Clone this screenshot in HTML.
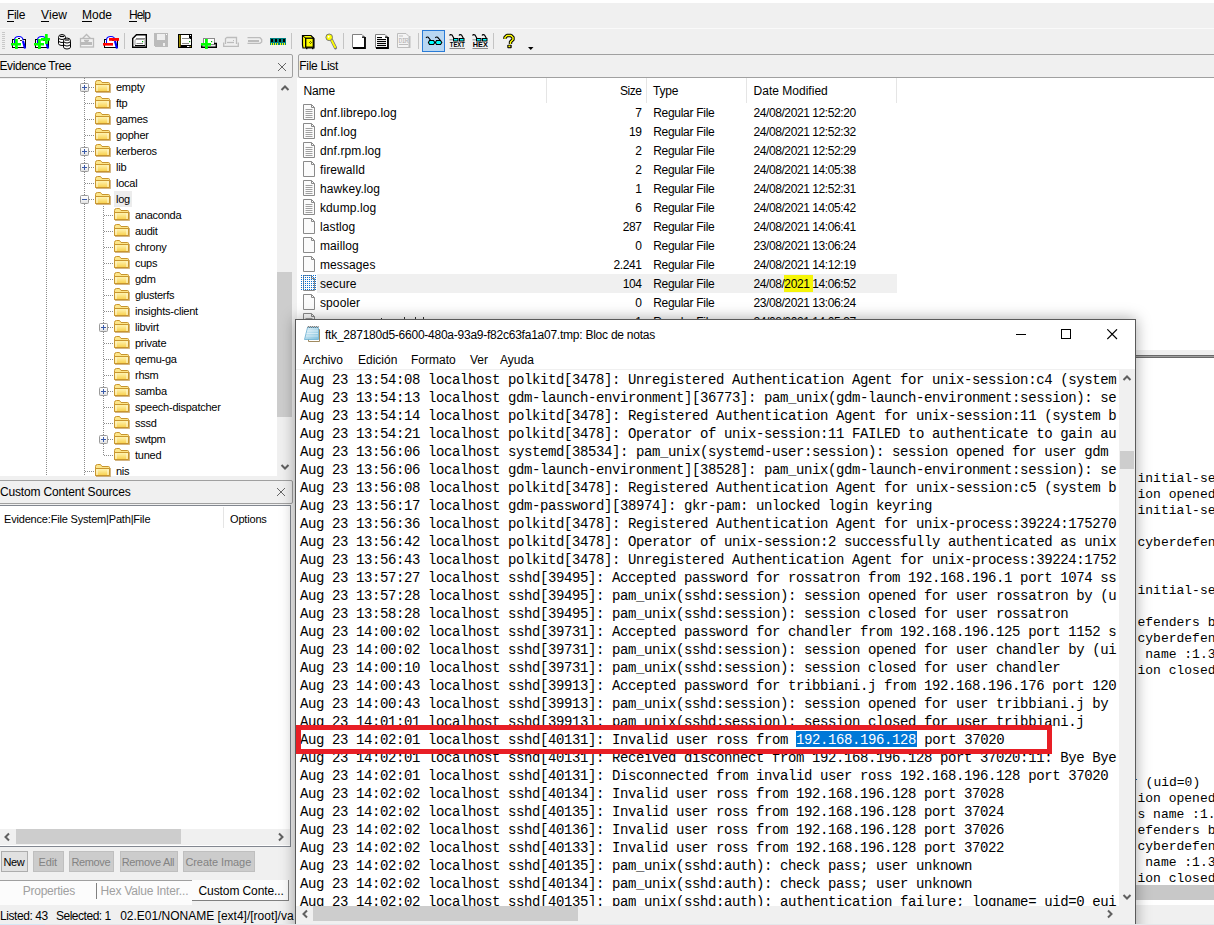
<!DOCTYPE html><html><head><meta charset="utf-8"><style>
*{box-sizing:border-box}
body{margin:0;width:1214px;height:925px;position:relative;overflow:hidden;background:#f0f0f0;font-family:"Liberation Sans",sans-serif;color:#000}
.a{position:absolute}
.t{position:absolute;white-space:pre;line-height:1}
.mono{font-family:"Liberation Mono",monospace}
u{text-decoration:none;border-bottom:1px solid #000;display:inline-block;line-height:10px;height:12px}
</style></head><body>

<div class="a" style="left:0px;top:0px;width:1214px;height:3px;background:#fff;"></div>
<div class="t" style="left:7px;top:9px;font-size:12px;letter-spacing:-0.334px;"><u>F</u>ile</div>
<div class="t" style="left:41px;top:9px;font-size:12px;"><u>V</u>iew</div>
<div class="t" style="left:82px;top:9px;font-size:12px;"><u>M</u>ode</div>
<div class="t" style="left:129px;top:9px;font-size:12px;letter-spacing:-0.920px;"><u>H</u>elp</div>
<div class="a" style="left:0px;top:28px;width:1214px;height:1px;background:#fafafa;"></div>
<svg class="a" style="left:0;top:0" width="540" height="54"><rect x="2" y="32" width="3" height="1" fill="#c8c8c8"/><rect x="2" y="34" width="3" height="1" fill="#c8c8c8"/><rect x="2" y="36" width="3" height="1" fill="#c8c8c8"/><rect x="2" y="38" width="3" height="1" fill="#c8c8c8"/><rect x="2" y="40" width="3" height="1" fill="#c8c8c8"/><rect x="2" y="42" width="3" height="1" fill="#c8c8c8"/><rect x="2" y="44" width="3" height="1" fill="#c8c8c8"/><rect x="2" y="46" width="3" height="1" fill="#c8c8c8"/><rect x="2" y="48" width="3" height="1" fill="#c8c8c8"/><rect x="124" y="33" width="1" height="16" fill="#c4c4c4"/><rect x="291" y="33" width="1" height="16" fill="#c4c4c4"/><rect x="343" y="33" width="1" height="16" fill="#c4c4c4"/><rect x="418" y="33" width="1" height="16" fill="#c4c4c4"/><rect x="493" y="33" width="1" height="16" fill="#c4c4c4"/><g transform="translate(8,32)"><rect x="4.5" y="7.5" width="13" height="8" fill="#fff" stroke="#000"/><path d="M6.5 11V8.2Q6.5 4.5 10.8 4.5Q15 4.5 15 8.5" fill="#fff" stroke="#0000ff" stroke-width="1.1"/><path d="M15 9L17 16.5" stroke="#0000ff" stroke-width="2.2"/><rect x="10" y="6" width="2" height="1" fill="#000"/><rect x="12" y="8" width="2" height="1" fill="#333"/></g><rect x="11" y="43" width="10" height="2.5" fill="#00ff00"/><rect x="15" y="39" width="2.8" height="10" fill="#00ff00"/><g transform="translate(31,32)"><rect x="4.5" y="7.5" width="13" height="8" fill="#fff" stroke="#000"/><path d="M6.5 11V8.2Q6.5 4.5 10.8 4.5Q15 4.5 15 8.5" fill="#fff" stroke="#0000ff" stroke-width="1.1"/><path d="M15 9L17 16.5" stroke="#0000ff" stroke-width="2.2"/><rect x="10" y="6" width="2" height="1" fill="#000"/><rect x="12" y="8" width="2" height="1" fill="#333"/></g><rect x="34" y="43" width="10" height="2.5" fill="#00ff00"/><rect x="38" y="39" width="2.8" height="10" fill="#00ff00"/><rect x="41" y="38" width="9" height="2.7" fill="#00ff00"/><rect x="45" y="34" width="2.7" height="10" fill="#00ff00"/><g transform="translate(58,34)" fill="none" stroke="#000"><path d="M0.5 3.5V9.5Q0.5 11.5 4 11.5Q7.5 11.5 7.5 9.5V3.5" fill="#fff"/><path d="M0.5 3.5Q0.5 0.5 4 0.5Q7.5 0.5 7.5 3.5Q7.5 5.5 4 5.5Q0.5 5.5 0.5 3.5Z" fill="#fff"/><path d="M0.5 6.5Q0.5 8.5 4 8.5Q7.5 8.5 7.5 6.5"/><path d="M2 2.5H6" stroke-width="1.2"/></g><g transform="translate(63,37.5)" fill="none" stroke="#000"><path d="M0.5 3.5V9.5Q0.5 11.5 4 11.5Q7.5 11.5 7.5 9.5V3.5" fill="#fff"/><path d="M0.5 3.5Q0.5 0.5 4 0.5Q7.5 0.5 7.5 3.5Q7.5 5.5 4 5.5Q0.5 5.5 0.5 3.5Z" fill="#fff"/><path d="M0.5 6.5Q0.5 8.5 4 8.5Q7.5 8.5 7.5 6.5"/><path d="M2 2.5H6" stroke-width="1.2"/></g><g fill="none" stroke="#bababa" stroke-width="1.3"><rect x="80.5" y="38.5" width="13" height="8.5"/><path d="M82.5 38.5L86.5 34.5L90.5 38.5"/><path d="M84 40.5H89M84.5 43L86.5 41L88.5 43"/></g><rect x="81" y="42" width="11" height="3" fill="#bababa"/><rect x="82" y="45" width="8" height="1" fill="#f4f4f4"/><g transform="translate(100,32)"><rect x="4.5" y="7.5" width="13" height="8" fill="#fff" stroke="#000"/><path d="M6.5 11V8.2Q6.5 4.5 10.8 4.5Q15 4.5 15 8.5" fill="#fff" stroke="#0000ff" stroke-width="1.1"/><path d="M15 9L17 16.5" stroke="#0000ff" stroke-width="2.2"/><rect x="10" y="6" width="2" height="1" fill="#000"/><rect x="12" y="8" width="2" height="1" fill="#333"/></g><rect x="103" y="43" width="10" height="2.6" fill="#ff0000"/><rect x="109" y="38" width="10" height="2.8" fill="#ff0000"/><g><path d="M132.7 38.5L136.5 34.7H146.3V47.3H132.7Z" fill="#fff" stroke="#000" stroke-width="1.4"/><path d="M136 38.5H145.5" stroke="#8a8a8a"/><rect x="135" y="39.5" width="10" height="6" rx="1" fill="#fff" stroke="#8a8a8a" stroke-width="0.8"/><rect x="135" y="45" width="10" height="1.2" fill="#000"/><path d="M136.5 43.5H143" stroke="#8a8a8a"/><rect x="142" y="41" width="1.2" height="1.2" fill="#0a0"/></g><rect x="154" y="33" width="14" height="14" fill="#bbbbbb"/><rect x="157" y="34" width="8" height="6" fill="#efefef"/><rect x="166" y="34" width="1" height="1" fill="#fff"/><rect x="163" y="43" width="2" height="3" fill="#efefef"/><rect x="154" y="46" width="1" height="1" fill="#f0f0f0"/><rect x="178" y="34" width="14" height="14" fill="#000"/><rect x="179" y="35" width="1.5" height="12" fill="#9a8a00"/><rect x="181" y="35" width="8" height="4" fill="#fff"/><rect x="181" y="39" width="10" height="6" fill="#fff"/><path d="M182 43.5H189" stroke="#8a8a8a"/><rect x="182" y="38" width="8" height="1" fill="#8a8a8a"/><rect x="189" y="41" width="1.2" height="1.2" fill="#0a0"/><rect x="190" y="35" width="1" height="1" fill="#fff"/><rect x="187" y="46" width="2.5" height="1" fill="#fff"/><rect x="190" y="46" width="1" height="1" fill="#9a8a00"/><rect x="203.5" y="38.5" width="11" height="6" fill="#fff" stroke="#8a8a8a"/><rect x="211" y="41" width="1.2" height="1.2" fill="#0a0"/><path d="M201.7 43.5V47.3H216.3V43.5H214" fill="none" stroke="#000" stroke-width="1.4"/><rect x="201" y="43" width="10" height="2.6" fill="#00ff00"/><rect x="205" y="39" width="2.8" height="10" fill="#00ff00"/><g fill="none" stroke="#bcbcbc" stroke-width="1.3"><path d="M225.5 44V38.5L227 37.5H236.5V44"/><path d="M223.7 42.5V46.3H238.3V42.5"/><path d="M227 42.5H234"/></g><rect x="233" y="40" width="1" height="1" fill="#bcbcbc"/><g fill="none" stroke="#bcbcbc" stroke-width="1.3"><path d="M247.5 37.7H260L261.7 39.5V42L260 43.3H247.5"/></g><rect x="248" y="40" width="11" height="2" fill="#bcbcbc"/><rect x="270" y="38" width="16" height="7" fill="#008080"/><rect x="271" y="39" width="2" height="3" fill="#000"/><rect x="275" y="39" width="2" height="3" fill="#000"/><rect x="279" y="39" width="2" height="3" fill="#000"/><rect x="283" y="39" width="2" height="3" fill="#000"/><rect x="271" y="43" width="1" height="2" fill="#ffff00"/><rect x="273" y="43" width="1" height="2" fill="#ffff00"/><rect x="275" y="43" width="1" height="2" fill="#ffff00"/><rect x="277" y="43" width="1" height="2" fill="#ffff00"/><rect x="280" y="43" width="1" height="2" fill="#ffff00"/><rect x="282" y="43" width="1" height="2" fill="#ffff00"/><rect x="284" y="43" width="1" height="2" fill="#ffff00"/><path d="M302.5 35.5H311L314 38.5V48H303L302.5 45Z" fill="#ffff00" stroke="#000" stroke-width="1.2"/><rect x="305.7" y="38.2" width="7.6" height="9" fill="#ffff00" stroke="#000" stroke-width="1.3"/><path d="M302.5 35.5L305.7 38.2" stroke="#000"/><rect x="306" y="48" width="1.4" height="1.2" fill="#000"/><rect x="312" y="48" width="1.4" height="1.2" fill="#000"/><path d="M310.5 41.5L311.5 42.5L310.5 43.5L309.5 42.5Z" fill="none" stroke="#000" stroke-width="0.7"/><path d="M331.3 39.6L335.5 47.8" stroke="#777" stroke-width="3.2" stroke-linecap="round"/><path d="M331.3 39.6L335.5 47.8" stroke="#ffff00" stroke-width="1.8"/><circle cx="329.2" cy="37.3" r="3.3" fill="#ffff00" stroke="#777" stroke-width="1"/><circle cx="328.6" cy="36.8" r="1" fill="#fff"/><path d="M352.5 34.5H362L364.5 37V47.5H352.5Z" fill="#fff" stroke="#808080"/><path d="M365 37V48H353" fill="none" stroke="#000" stroke-width="1.8"/><rect x="362" y="36.5" width="2.5" height="1.3" fill="#000"/><path d="M375.5 34.5H385L387.5 37V47.5H375.5Z" fill="#fff" stroke="#808080"/><path d="M388 37V48H376" fill="none" stroke="#000" stroke-width="1.8"/><rect x="385" y="36.5" width="2.5" height="1.3" fill="#000"/><rect x="377" y="37" width="5" height="1.1" fill="#000"/><rect x="377" y="39" width="9" height="1.1" fill="#000"/><rect x="377" y="41" width="9" height="1.1" fill="#000"/><rect x="377" y="43" width="9" height="1.1" fill="#000"/><rect x="377" y="45" width="9" height="1.1" fill="#000"/><path d="M397.5 33.5H406L409 36.5V47.5H397.5Z" fill="#f4f4f4" stroke="#bdbdbd"/><rect x="409" y="36" width="1.5" height="12" fill="#bdbdbd"/><rect x="399" y="35.5" width="4" height="1" fill="#bdbdbd"/><rect x="399" y="44" width="9" height="1" fill="#bdbdbd"/><text x="398.6" y="42.6" font-family="Liberation Mono" font-size="6.5" fill="#b0b0b0" letter-spacing="-0.8">DIR</text><rect x="422.5" y="30.5" width="22" height="21" fill="#b9d7f2" stroke="#2a7bd6"/><g stroke="#000" fill="none" stroke-width="1.1"><path d="M426 37.8Q427 36.5 428.3 37.3L430.8 40.5M435.3 37.8Q436.3 36.5 437.6 37.3L440.5 40.5"/></g><path d="M429.5 40.5H433.5L434.8 42.5L433.5 44.5H429.5L428.4 42.5Z" fill="#00ffff" stroke="#000" stroke-width="1.1"/><path d="M436.5 40.5H440.5L441.8 42.5L440.5 44.5H436.5L435.4 42.5Z" fill="#00ffff" stroke="#000" stroke-width="1.1"/><path d="M449.5 35.5Q450.5 34 452 35L454 38.5M459 35.5Q460 34 461.5 35L463.5 38.5" stroke="#000" fill="none" stroke-width="1.1"/><rect x="449.5" y="39.3" width="7" height="1" fill="#8a8a8a"/><rect x="453.5" y="38.5" width="4.5" height="2.5" fill="#00ffff" stroke="#000"/><rect x="459.5" y="38.5" width="4.5" height="2.5" fill="#00ffff" stroke="#000"/><rect x="449.5" y="48" width="15.5" height="1" fill="#8a8a8a"/><text x="449.8" y="47.2" font-family="Liberation Sans" font-weight="bold" font-size="6.6" fill="#000" textLength="15" lengthAdjust="spacingAndGlyphs">TEXT</text><path d="M472.5 35.5Q473.5 34 475 35L477 38.5M482 35.5Q483 34 484.5 35L486.5 38.5" stroke="#000" fill="none" stroke-width="1.1"/><rect x="472.5" y="39.3" width="7" height="1" fill="#8a8a8a"/><rect x="476.5" y="38.5" width="4.5" height="2.5" fill="#00ffff" stroke="#000"/><rect x="482.5" y="38.5" width="4.5" height="2.5" fill="#00ffff" stroke="#000"/><rect x="472.5" y="48" width="15.5" height="1" fill="#8a8a8a"/><text x="472.8" y="47.2" font-family="Liberation Sans" font-weight="bold" font-size="6.6" fill="#000" textLength="15" lengthAdjust="spacingAndGlyphs">HEX</text><path d="M505 39V37.5L507 35.5H511L513 37.5V39.5L510.5 42V44" fill="none" stroke="#000" stroke-width="3.4" stroke-linejoin="round"/><path d="M505 39V37.5L507 35.5H511L513 37.5V39.5L510.5 42V44" fill="none" stroke="#ffff00" stroke-width="1.4" stroke-linejoin="miter"/><rect x="507.3" y="44.8" width="4.4" height="3.4" rx="0.8" fill="#000"/><rect x="508.4" y="45.6" width="2" height="1.6" fill="#ffff00"/><path d="M528 47H533.5L530.75 50Z" fill="#000"/></svg>
<div class="a" style="left:-2px;top:54px;width:295px;height:24px;border:1px solid #a0a0a0;border-radius:2px;background:#f0f0f0"></div>
<div class="t" style="left:-0.5px;top:60px;font-size:12px;letter-spacing:-0.401px;">Evidence Tree</div>
<svg class="a" style="left:277px;top:62px" width="10" height="10"><path d="M1 1L9 9M9 1L1 9" stroke="#666" stroke-width="1"/></svg>
<div class="a" style="left:0px;top:79px;width:277px;height:397px;background:#fff;"></div>
<div class="a" style="left:277px;top:78px;width:17px;height:398px;background:#f0f0f0;"></div>
<div class="a" style="left:277px;top:272px;width:15px;height:145px;background:#cdcdcd;"></div>
<svg class="a" style="left:280px;top:84px" width="10" height="8"><path d="M1.5 6L5 2.5L8.5 6" stroke="#606060" stroke-width="2" fill="none"/></svg>
<svg class="a" style="left:280px;top:463px" width="10" height="8"><path d="M1.5 2L5 5.5L8.5 2" stroke="#606060" stroke-width="2" fill="none"/></svg>
<div class="a" style="left:46px;top:78px;width:1px;height:398px;background:repeating-linear-gradient(#8c8c8c 0 1px,transparent 1px 2px)"></div>
<div class="a" style="left:84px;top:78px;width:1px;height:398px;background:repeating-linear-gradient(#8c8c8c 0 1px,transparent 1px 2px)"></div>
<div class="a" style="left:103px;top:206px;width:1px;height:250px;background:repeating-linear-gradient(#8c8c8c 0 1px,transparent 1px 2px)"></div>
<div class="a" style="left:89px;top:87px;width:6px;height:1px;background:repeating-linear-gradient(90deg,#8c8c8c 0 1px,transparent 1px 2px)"></div>
<svg class="a" style="left:95px;top:80px" width="16" height="13"><defs><linearGradient id="fg" x1="0" y1="0" x2="0" y2="1"><stop offset="0" stop-color="#fff6b8"/><stop offset="1" stop-color="#f8cf4a"/></linearGradient></defs><path d="M0.5 2.5Q0.5 0.5 2.5 0.5H5.5L7 2.5H13.5Q14.5 2.5 14.5 3.5V11.5H0.5Z" fill="#fde68a" stroke="#c8952e"/><path d="M0.5 4.5H14.5V11.5H0.5Z" fill="url(#fg)" stroke="#c8952e"/><path d="M2 5.5V11M13 5.5V11" stroke="#fffbe0" stroke-width="1"/><path d="M1 12.5H15.5V4" stroke="#b07a1e" stroke-opacity="0.55" fill="none"/></svg>
<svg class="a" style="left:80px;top:83px" width="9" height="9"><defs><linearGradient id="pb" x1="0" y1="0" x2="0" y2="1"><stop offset="0" stop-color="#ffffff"/><stop offset="0.5" stop-color="#f6f6f6"/><stop offset="1" stop-color="#dedede"/></linearGradient></defs><rect x="0.5" y="0.5" width="8" height="8" rx="1" fill="url(#pb)" stroke="#9a9a9a"/><path d="M2 4.5H7M4.5 2V7" stroke="#3a5aa8" stroke-width="1"/></svg>
<div class="t" style="left:116px;top:82px;font-size:11px;letter-spacing:-0.25px;color:#000">empty</div>
<div class="a" style="left:85px;top:103px;width:10px;height:1px;background:repeating-linear-gradient(90deg,#8c8c8c 0 1px,transparent 1px 2px)"></div>
<svg class="a" style="left:95px;top:96px" width="16" height="13"><defs><linearGradient id="fg" x1="0" y1="0" x2="0" y2="1"><stop offset="0" stop-color="#fff6b8"/><stop offset="1" stop-color="#f8cf4a"/></linearGradient></defs><path d="M0.5 2.5Q0.5 0.5 2.5 0.5H5.5L7 2.5H13.5Q14.5 2.5 14.5 3.5V11.5H0.5Z" fill="#fde68a" stroke="#c8952e"/><path d="M0.5 4.5H14.5V11.5H0.5Z" fill="url(#fg)" stroke="#c8952e"/><path d="M2 5.5V11M13 5.5V11" stroke="#fffbe0" stroke-width="1"/><path d="M1 12.5H15.5V4" stroke="#b07a1e" stroke-opacity="0.55" fill="none"/></svg>
<div class="t" style="left:116px;top:98px;font-size:11px;letter-spacing:-0.25px;color:#000">ftp</div>
<div class="a" style="left:85px;top:119px;width:10px;height:1px;background:repeating-linear-gradient(90deg,#8c8c8c 0 1px,transparent 1px 2px)"></div>
<svg class="a" style="left:95px;top:112px" width="16" height="13"><defs><linearGradient id="fg" x1="0" y1="0" x2="0" y2="1"><stop offset="0" stop-color="#fff6b8"/><stop offset="1" stop-color="#f8cf4a"/></linearGradient></defs><path d="M0.5 2.5Q0.5 0.5 2.5 0.5H5.5L7 2.5H13.5Q14.5 2.5 14.5 3.5V11.5H0.5Z" fill="#fde68a" stroke="#c8952e"/><path d="M0.5 4.5H14.5V11.5H0.5Z" fill="url(#fg)" stroke="#c8952e"/><path d="M2 5.5V11M13 5.5V11" stroke="#fffbe0" stroke-width="1"/><path d="M1 12.5H15.5V4" stroke="#b07a1e" stroke-opacity="0.55" fill="none"/></svg>
<div class="t" style="left:116px;top:114px;font-size:11px;letter-spacing:-0.25px;color:#000">games</div>
<div class="a" style="left:85px;top:135px;width:10px;height:1px;background:repeating-linear-gradient(90deg,#8c8c8c 0 1px,transparent 1px 2px)"></div>
<svg class="a" style="left:95px;top:128px" width="16" height="13"><defs><linearGradient id="fg" x1="0" y1="0" x2="0" y2="1"><stop offset="0" stop-color="#fff6b8"/><stop offset="1" stop-color="#f8cf4a"/></linearGradient></defs><path d="M0.5 2.5Q0.5 0.5 2.5 0.5H5.5L7 2.5H13.5Q14.5 2.5 14.5 3.5V11.5H0.5Z" fill="#fde68a" stroke="#c8952e"/><path d="M0.5 4.5H14.5V11.5H0.5Z" fill="url(#fg)" stroke="#c8952e"/><path d="M2 5.5V11M13 5.5V11" stroke="#fffbe0" stroke-width="1"/><path d="M1 12.5H15.5V4" stroke="#b07a1e" stroke-opacity="0.55" fill="none"/></svg>
<div class="t" style="left:116px;top:130px;font-size:11px;letter-spacing:-0.25px;color:#000">gopher</div>
<div class="a" style="left:89px;top:151px;width:6px;height:1px;background:repeating-linear-gradient(90deg,#8c8c8c 0 1px,transparent 1px 2px)"></div>
<svg class="a" style="left:95px;top:144px" width="16" height="13"><defs><linearGradient id="fg" x1="0" y1="0" x2="0" y2="1"><stop offset="0" stop-color="#fff6b8"/><stop offset="1" stop-color="#f8cf4a"/></linearGradient></defs><path d="M0.5 2.5Q0.5 0.5 2.5 0.5H5.5L7 2.5H13.5Q14.5 2.5 14.5 3.5V11.5H0.5Z" fill="#fde68a" stroke="#c8952e"/><path d="M0.5 4.5H14.5V11.5H0.5Z" fill="url(#fg)" stroke="#c8952e"/><path d="M2 5.5V11M13 5.5V11" stroke="#fffbe0" stroke-width="1"/><path d="M1 12.5H15.5V4" stroke="#b07a1e" stroke-opacity="0.55" fill="none"/></svg>
<svg class="a" style="left:80px;top:147px" width="9" height="9"><defs><linearGradient id="pb" x1="0" y1="0" x2="0" y2="1"><stop offset="0" stop-color="#ffffff"/><stop offset="0.5" stop-color="#f6f6f6"/><stop offset="1" stop-color="#dedede"/></linearGradient></defs><rect x="0.5" y="0.5" width="8" height="8" rx="1" fill="url(#pb)" stroke="#9a9a9a"/><path d="M2 4.5H7M4.5 2V7" stroke="#3a5aa8" stroke-width="1"/></svg>
<div class="t" style="left:116px;top:146px;font-size:11px;letter-spacing:-0.25px;color:#000">kerberos</div>
<div class="a" style="left:89px;top:167px;width:6px;height:1px;background:repeating-linear-gradient(90deg,#8c8c8c 0 1px,transparent 1px 2px)"></div>
<svg class="a" style="left:95px;top:160px" width="16" height="13"><defs><linearGradient id="fg" x1="0" y1="0" x2="0" y2="1"><stop offset="0" stop-color="#fff6b8"/><stop offset="1" stop-color="#f8cf4a"/></linearGradient></defs><path d="M0.5 2.5Q0.5 0.5 2.5 0.5H5.5L7 2.5H13.5Q14.5 2.5 14.5 3.5V11.5H0.5Z" fill="#fde68a" stroke="#c8952e"/><path d="M0.5 4.5H14.5V11.5H0.5Z" fill="url(#fg)" stroke="#c8952e"/><path d="M2 5.5V11M13 5.5V11" stroke="#fffbe0" stroke-width="1"/><path d="M1 12.5H15.5V4" stroke="#b07a1e" stroke-opacity="0.55" fill="none"/></svg>
<svg class="a" style="left:80px;top:163px" width="9" height="9"><defs><linearGradient id="pb" x1="0" y1="0" x2="0" y2="1"><stop offset="0" stop-color="#ffffff"/><stop offset="0.5" stop-color="#f6f6f6"/><stop offset="1" stop-color="#dedede"/></linearGradient></defs><rect x="0.5" y="0.5" width="8" height="8" rx="1" fill="url(#pb)" stroke="#9a9a9a"/><path d="M2 4.5H7M4.5 2V7" stroke="#3a5aa8" stroke-width="1"/></svg>
<div class="t" style="left:116px;top:162px;font-size:11px;letter-spacing:-0.25px;color:#000">lib</div>
<div class="a" style="left:85px;top:183px;width:10px;height:1px;background:repeating-linear-gradient(90deg,#8c8c8c 0 1px,transparent 1px 2px)"></div>
<svg class="a" style="left:95px;top:176px" width="16" height="13"><defs><linearGradient id="fg" x1="0" y1="0" x2="0" y2="1"><stop offset="0" stop-color="#fff6b8"/><stop offset="1" stop-color="#f8cf4a"/></linearGradient></defs><path d="M0.5 2.5Q0.5 0.5 2.5 0.5H5.5L7 2.5H13.5Q14.5 2.5 14.5 3.5V11.5H0.5Z" fill="#fde68a" stroke="#c8952e"/><path d="M0.5 4.5H14.5V11.5H0.5Z" fill="url(#fg)" stroke="#c8952e"/><path d="M2 5.5V11M13 5.5V11" stroke="#fffbe0" stroke-width="1"/><path d="M1 12.5H15.5V4" stroke="#b07a1e" stroke-opacity="0.55" fill="none"/></svg>
<div class="t" style="left:116px;top:178px;font-size:11px;letter-spacing:-0.25px;color:#000">local</div>
<div class="a" style="left:89px;top:199px;width:6px;height:1px;background:repeating-linear-gradient(90deg,#8c8c8c 0 1px,transparent 1px 2px)"></div>
<div class="a" style="left:114px;top:191px;width:18px;height:16px;background:#ececec"></div>
<svg class="a" style="left:95px;top:192px" width="16" height="13"><defs><linearGradient id="fg" x1="0" y1="0" x2="0" y2="1"><stop offset="0" stop-color="#fff6b8"/><stop offset="1" stop-color="#f8cf4a"/></linearGradient></defs><path d="M0.5 2.5Q0.5 0.5 2.5 0.5H5.5L7 2.5H13.5Q14.5 2.5 14.5 3.5V11.5H0.5Z" fill="#fde68a" stroke="#c8952e"/><path d="M0.5 4.5H14.5V11.5H0.5Z" fill="url(#fg)" stroke="#c8952e"/><path d="M2 5.5V11M13 5.5V11" stroke="#fffbe0" stroke-width="1"/><path d="M1 12.5H15.5V4" stroke="#b07a1e" stroke-opacity="0.55" fill="none"/></svg>
<svg class="a" style="left:80px;top:195px" width="9" height="9"><defs><linearGradient id="pb" x1="0" y1="0" x2="0" y2="1"><stop offset="0" stop-color="#ffffff"/><stop offset="0.5" stop-color="#f6f6f6"/><stop offset="1" stop-color="#dedede"/></linearGradient></defs><rect x="0.5" y="0.5" width="8" height="8" rx="1" fill="url(#pb)" stroke="#9a9a9a"/><path d="M2 4.5H7" stroke="#3a5aa8" stroke-width="1"/></svg>
<div class="t" style="left:116px;top:194px;font-size:11px;letter-spacing:-0.25px;color:#000">log</div>
<div class="a" style="left:104px;top:215px;width:10px;height:1px;background:repeating-linear-gradient(90deg,#8c8c8c 0 1px,transparent 1px 2px)"></div>
<svg class="a" style="left:114px;top:208px" width="16" height="13"><defs><linearGradient id="fg" x1="0" y1="0" x2="0" y2="1"><stop offset="0" stop-color="#fff6b8"/><stop offset="1" stop-color="#f8cf4a"/></linearGradient></defs><path d="M0.5 2.5Q0.5 0.5 2.5 0.5H5.5L7 2.5H13.5Q14.5 2.5 14.5 3.5V11.5H0.5Z" fill="#fde68a" stroke="#c8952e"/><path d="M0.5 4.5H14.5V11.5H0.5Z" fill="url(#fg)" stroke="#c8952e"/><path d="M2 5.5V11M13 5.5V11" stroke="#fffbe0" stroke-width="1"/><path d="M1 12.5H15.5V4" stroke="#b07a1e" stroke-opacity="0.55" fill="none"/></svg>
<div class="t" style="left:135px;top:210px;font-size:11px;letter-spacing:-0.25px;color:#000">anaconda</div>
<div class="a" style="left:104px;top:231px;width:10px;height:1px;background:repeating-linear-gradient(90deg,#8c8c8c 0 1px,transparent 1px 2px)"></div>
<svg class="a" style="left:114px;top:224px" width="16" height="13"><defs><linearGradient id="fg" x1="0" y1="0" x2="0" y2="1"><stop offset="0" stop-color="#fff6b8"/><stop offset="1" stop-color="#f8cf4a"/></linearGradient></defs><path d="M0.5 2.5Q0.5 0.5 2.5 0.5H5.5L7 2.5H13.5Q14.5 2.5 14.5 3.5V11.5H0.5Z" fill="#fde68a" stroke="#c8952e"/><path d="M0.5 4.5H14.5V11.5H0.5Z" fill="url(#fg)" stroke="#c8952e"/><path d="M2 5.5V11M13 5.5V11" stroke="#fffbe0" stroke-width="1"/><path d="M1 12.5H15.5V4" stroke="#b07a1e" stroke-opacity="0.55" fill="none"/></svg>
<div class="t" style="left:135px;top:226px;font-size:11px;letter-spacing:-0.25px;color:#000">audit</div>
<div class="a" style="left:104px;top:247px;width:10px;height:1px;background:repeating-linear-gradient(90deg,#8c8c8c 0 1px,transparent 1px 2px)"></div>
<svg class="a" style="left:114px;top:240px" width="16" height="13"><defs><linearGradient id="fg" x1="0" y1="0" x2="0" y2="1"><stop offset="0" stop-color="#fff6b8"/><stop offset="1" stop-color="#f8cf4a"/></linearGradient></defs><path d="M0.5 2.5Q0.5 0.5 2.5 0.5H5.5L7 2.5H13.5Q14.5 2.5 14.5 3.5V11.5H0.5Z" fill="#fde68a" stroke="#c8952e"/><path d="M0.5 4.5H14.5V11.5H0.5Z" fill="url(#fg)" stroke="#c8952e"/><path d="M2 5.5V11M13 5.5V11" stroke="#fffbe0" stroke-width="1"/><path d="M1 12.5H15.5V4" stroke="#b07a1e" stroke-opacity="0.55" fill="none"/></svg>
<div class="t" style="left:135px;top:242px;font-size:11px;letter-spacing:-0.25px;color:#000">chrony</div>
<div class="a" style="left:104px;top:263px;width:10px;height:1px;background:repeating-linear-gradient(90deg,#8c8c8c 0 1px,transparent 1px 2px)"></div>
<svg class="a" style="left:114px;top:256px" width="16" height="13"><defs><linearGradient id="fg" x1="0" y1="0" x2="0" y2="1"><stop offset="0" stop-color="#fff6b8"/><stop offset="1" stop-color="#f8cf4a"/></linearGradient></defs><path d="M0.5 2.5Q0.5 0.5 2.5 0.5H5.5L7 2.5H13.5Q14.5 2.5 14.5 3.5V11.5H0.5Z" fill="#fde68a" stroke="#c8952e"/><path d="M0.5 4.5H14.5V11.5H0.5Z" fill="url(#fg)" stroke="#c8952e"/><path d="M2 5.5V11M13 5.5V11" stroke="#fffbe0" stroke-width="1"/><path d="M1 12.5H15.5V4" stroke="#b07a1e" stroke-opacity="0.55" fill="none"/></svg>
<div class="t" style="left:135px;top:258px;font-size:11px;letter-spacing:-0.25px;color:#000">cups</div>
<div class="a" style="left:104px;top:279px;width:10px;height:1px;background:repeating-linear-gradient(90deg,#8c8c8c 0 1px,transparent 1px 2px)"></div>
<svg class="a" style="left:114px;top:272px" width="16" height="13"><defs><linearGradient id="fg" x1="0" y1="0" x2="0" y2="1"><stop offset="0" stop-color="#fff6b8"/><stop offset="1" stop-color="#f8cf4a"/></linearGradient></defs><path d="M0.5 2.5Q0.5 0.5 2.5 0.5H5.5L7 2.5H13.5Q14.5 2.5 14.5 3.5V11.5H0.5Z" fill="#fde68a" stroke="#c8952e"/><path d="M0.5 4.5H14.5V11.5H0.5Z" fill="url(#fg)" stroke="#c8952e"/><path d="M2 5.5V11M13 5.5V11" stroke="#fffbe0" stroke-width="1"/><path d="M1 12.5H15.5V4" stroke="#b07a1e" stroke-opacity="0.55" fill="none"/></svg>
<div class="t" style="left:135px;top:274px;font-size:11px;letter-spacing:-0.25px;color:#000">gdm</div>
<div class="a" style="left:104px;top:295px;width:10px;height:1px;background:repeating-linear-gradient(90deg,#8c8c8c 0 1px,transparent 1px 2px)"></div>
<svg class="a" style="left:114px;top:288px" width="16" height="13"><defs><linearGradient id="fg" x1="0" y1="0" x2="0" y2="1"><stop offset="0" stop-color="#fff6b8"/><stop offset="1" stop-color="#f8cf4a"/></linearGradient></defs><path d="M0.5 2.5Q0.5 0.5 2.5 0.5H5.5L7 2.5H13.5Q14.5 2.5 14.5 3.5V11.5H0.5Z" fill="#fde68a" stroke="#c8952e"/><path d="M0.5 4.5H14.5V11.5H0.5Z" fill="url(#fg)" stroke="#c8952e"/><path d="M2 5.5V11M13 5.5V11" stroke="#fffbe0" stroke-width="1"/><path d="M1 12.5H15.5V4" stroke="#b07a1e" stroke-opacity="0.55" fill="none"/></svg>
<div class="t" style="left:135px;top:290px;font-size:11px;letter-spacing:-0.25px;color:#000">glusterfs</div>
<div class="a" style="left:104px;top:311px;width:10px;height:1px;background:repeating-linear-gradient(90deg,#8c8c8c 0 1px,transparent 1px 2px)"></div>
<svg class="a" style="left:114px;top:304px" width="16" height="13"><defs><linearGradient id="fg" x1="0" y1="0" x2="0" y2="1"><stop offset="0" stop-color="#fff6b8"/><stop offset="1" stop-color="#f8cf4a"/></linearGradient></defs><path d="M0.5 2.5Q0.5 0.5 2.5 0.5H5.5L7 2.5H13.5Q14.5 2.5 14.5 3.5V11.5H0.5Z" fill="#fde68a" stroke="#c8952e"/><path d="M0.5 4.5H14.5V11.5H0.5Z" fill="url(#fg)" stroke="#c8952e"/><path d="M2 5.5V11M13 5.5V11" stroke="#fffbe0" stroke-width="1"/><path d="M1 12.5H15.5V4" stroke="#b07a1e" stroke-opacity="0.55" fill="none"/></svg>
<div class="t" style="left:135px;top:306px;font-size:11px;letter-spacing:-0.25px;color:#000">insights-client</div>
<div class="a" style="left:108px;top:327px;width:6px;height:1px;background:repeating-linear-gradient(90deg,#8c8c8c 0 1px,transparent 1px 2px)"></div>
<svg class="a" style="left:114px;top:320px" width="16" height="13"><defs><linearGradient id="fg" x1="0" y1="0" x2="0" y2="1"><stop offset="0" stop-color="#fff6b8"/><stop offset="1" stop-color="#f8cf4a"/></linearGradient></defs><path d="M0.5 2.5Q0.5 0.5 2.5 0.5H5.5L7 2.5H13.5Q14.5 2.5 14.5 3.5V11.5H0.5Z" fill="#fde68a" stroke="#c8952e"/><path d="M0.5 4.5H14.5V11.5H0.5Z" fill="url(#fg)" stroke="#c8952e"/><path d="M2 5.5V11M13 5.5V11" stroke="#fffbe0" stroke-width="1"/><path d="M1 12.5H15.5V4" stroke="#b07a1e" stroke-opacity="0.55" fill="none"/></svg>
<svg class="a" style="left:99px;top:323px" width="9" height="9"><defs><linearGradient id="pb" x1="0" y1="0" x2="0" y2="1"><stop offset="0" stop-color="#ffffff"/><stop offset="0.5" stop-color="#f6f6f6"/><stop offset="1" stop-color="#dedede"/></linearGradient></defs><rect x="0.5" y="0.5" width="8" height="8" rx="1" fill="url(#pb)" stroke="#9a9a9a"/><path d="M2 4.5H7M4.5 2V7" stroke="#3a5aa8" stroke-width="1"/></svg>
<div class="t" style="left:135px;top:322px;font-size:11px;letter-spacing:-0.25px;color:#000">libvirt</div>
<div class="a" style="left:104px;top:343px;width:10px;height:1px;background:repeating-linear-gradient(90deg,#8c8c8c 0 1px,transparent 1px 2px)"></div>
<svg class="a" style="left:114px;top:336px" width="16" height="13"><defs><linearGradient id="fg" x1="0" y1="0" x2="0" y2="1"><stop offset="0" stop-color="#fff6b8"/><stop offset="1" stop-color="#f8cf4a"/></linearGradient></defs><path d="M0.5 2.5Q0.5 0.5 2.5 0.5H5.5L7 2.5H13.5Q14.5 2.5 14.5 3.5V11.5H0.5Z" fill="#fde68a" stroke="#c8952e"/><path d="M0.5 4.5H14.5V11.5H0.5Z" fill="url(#fg)" stroke="#c8952e"/><path d="M2 5.5V11M13 5.5V11" stroke="#fffbe0" stroke-width="1"/><path d="M1 12.5H15.5V4" stroke="#b07a1e" stroke-opacity="0.55" fill="none"/></svg>
<div class="t" style="left:135px;top:338px;font-size:11px;letter-spacing:-0.25px;color:#000">private</div>
<div class="a" style="left:104px;top:359px;width:10px;height:1px;background:repeating-linear-gradient(90deg,#8c8c8c 0 1px,transparent 1px 2px)"></div>
<svg class="a" style="left:114px;top:352px" width="16" height="13"><defs><linearGradient id="fg" x1="0" y1="0" x2="0" y2="1"><stop offset="0" stop-color="#fff6b8"/><stop offset="1" stop-color="#f8cf4a"/></linearGradient></defs><path d="M0.5 2.5Q0.5 0.5 2.5 0.5H5.5L7 2.5H13.5Q14.5 2.5 14.5 3.5V11.5H0.5Z" fill="#fde68a" stroke="#c8952e"/><path d="M0.5 4.5H14.5V11.5H0.5Z" fill="url(#fg)" stroke="#c8952e"/><path d="M2 5.5V11M13 5.5V11" stroke="#fffbe0" stroke-width="1"/><path d="M1 12.5H15.5V4" stroke="#b07a1e" stroke-opacity="0.55" fill="none"/></svg>
<div class="t" style="left:135px;top:354px;font-size:11px;letter-spacing:-0.25px;color:#000">qemu-ga</div>
<div class="a" style="left:104px;top:375px;width:10px;height:1px;background:repeating-linear-gradient(90deg,#8c8c8c 0 1px,transparent 1px 2px)"></div>
<svg class="a" style="left:114px;top:368px" width="16" height="13"><defs><linearGradient id="fg" x1="0" y1="0" x2="0" y2="1"><stop offset="0" stop-color="#fff6b8"/><stop offset="1" stop-color="#f8cf4a"/></linearGradient></defs><path d="M0.5 2.5Q0.5 0.5 2.5 0.5H5.5L7 2.5H13.5Q14.5 2.5 14.5 3.5V11.5H0.5Z" fill="#fde68a" stroke="#c8952e"/><path d="M0.5 4.5H14.5V11.5H0.5Z" fill="url(#fg)" stroke="#c8952e"/><path d="M2 5.5V11M13 5.5V11" stroke="#fffbe0" stroke-width="1"/><path d="M1 12.5H15.5V4" stroke="#b07a1e" stroke-opacity="0.55" fill="none"/></svg>
<div class="t" style="left:135px;top:370px;font-size:11px;letter-spacing:-0.25px;color:#000">rhsm</div>
<div class="a" style="left:108px;top:391px;width:6px;height:1px;background:repeating-linear-gradient(90deg,#8c8c8c 0 1px,transparent 1px 2px)"></div>
<svg class="a" style="left:114px;top:384px" width="16" height="13"><defs><linearGradient id="fg" x1="0" y1="0" x2="0" y2="1"><stop offset="0" stop-color="#fff6b8"/><stop offset="1" stop-color="#f8cf4a"/></linearGradient></defs><path d="M0.5 2.5Q0.5 0.5 2.5 0.5H5.5L7 2.5H13.5Q14.5 2.5 14.5 3.5V11.5H0.5Z" fill="#fde68a" stroke="#c8952e"/><path d="M0.5 4.5H14.5V11.5H0.5Z" fill="url(#fg)" stroke="#c8952e"/><path d="M2 5.5V11M13 5.5V11" stroke="#fffbe0" stroke-width="1"/><path d="M1 12.5H15.5V4" stroke="#b07a1e" stroke-opacity="0.55" fill="none"/></svg>
<svg class="a" style="left:99px;top:387px" width="9" height="9"><defs><linearGradient id="pb" x1="0" y1="0" x2="0" y2="1"><stop offset="0" stop-color="#ffffff"/><stop offset="0.5" stop-color="#f6f6f6"/><stop offset="1" stop-color="#dedede"/></linearGradient></defs><rect x="0.5" y="0.5" width="8" height="8" rx="1" fill="url(#pb)" stroke="#9a9a9a"/><path d="M2 4.5H7M4.5 2V7" stroke="#3a5aa8" stroke-width="1"/></svg>
<div class="t" style="left:135px;top:386px;font-size:11px;letter-spacing:-0.25px;color:#000">samba</div>
<div class="a" style="left:104px;top:407px;width:10px;height:1px;background:repeating-linear-gradient(90deg,#8c8c8c 0 1px,transparent 1px 2px)"></div>
<svg class="a" style="left:114px;top:400px" width="16" height="13"><defs><linearGradient id="fg" x1="0" y1="0" x2="0" y2="1"><stop offset="0" stop-color="#fff6b8"/><stop offset="1" stop-color="#f8cf4a"/></linearGradient></defs><path d="M0.5 2.5Q0.5 0.5 2.5 0.5H5.5L7 2.5H13.5Q14.5 2.5 14.5 3.5V11.5H0.5Z" fill="#fde68a" stroke="#c8952e"/><path d="M0.5 4.5H14.5V11.5H0.5Z" fill="url(#fg)" stroke="#c8952e"/><path d="M2 5.5V11M13 5.5V11" stroke="#fffbe0" stroke-width="1"/><path d="M1 12.5H15.5V4" stroke="#b07a1e" stroke-opacity="0.55" fill="none"/></svg>
<div class="t" style="left:135px;top:402px;font-size:11px;letter-spacing:-0.25px;color:#000">speech-dispatcher</div>
<div class="a" style="left:104px;top:423px;width:10px;height:1px;background:repeating-linear-gradient(90deg,#8c8c8c 0 1px,transparent 1px 2px)"></div>
<svg class="a" style="left:114px;top:416px" width="16" height="13"><defs><linearGradient id="fg" x1="0" y1="0" x2="0" y2="1"><stop offset="0" stop-color="#fff6b8"/><stop offset="1" stop-color="#f8cf4a"/></linearGradient></defs><path d="M0.5 2.5Q0.5 0.5 2.5 0.5H5.5L7 2.5H13.5Q14.5 2.5 14.5 3.5V11.5H0.5Z" fill="#fde68a" stroke="#c8952e"/><path d="M0.5 4.5H14.5V11.5H0.5Z" fill="url(#fg)" stroke="#c8952e"/><path d="M2 5.5V11M13 5.5V11" stroke="#fffbe0" stroke-width="1"/><path d="M1 12.5H15.5V4" stroke="#b07a1e" stroke-opacity="0.55" fill="none"/></svg>
<div class="t" style="left:135px;top:418px;font-size:11px;letter-spacing:-0.25px;color:#000">sssd</div>
<div class="a" style="left:108px;top:439px;width:6px;height:1px;background:repeating-linear-gradient(90deg,#8c8c8c 0 1px,transparent 1px 2px)"></div>
<svg class="a" style="left:114px;top:432px" width="16" height="13"><defs><linearGradient id="fg" x1="0" y1="0" x2="0" y2="1"><stop offset="0" stop-color="#fff6b8"/><stop offset="1" stop-color="#f8cf4a"/></linearGradient></defs><path d="M0.5 2.5Q0.5 0.5 2.5 0.5H5.5L7 2.5H13.5Q14.5 2.5 14.5 3.5V11.5H0.5Z" fill="#fde68a" stroke="#c8952e"/><path d="M0.5 4.5H14.5V11.5H0.5Z" fill="url(#fg)" stroke="#c8952e"/><path d="M2 5.5V11M13 5.5V11" stroke="#fffbe0" stroke-width="1"/><path d="M1 12.5H15.5V4" stroke="#b07a1e" stroke-opacity="0.55" fill="none"/></svg>
<svg class="a" style="left:99px;top:435px" width="9" height="9"><defs><linearGradient id="pb" x1="0" y1="0" x2="0" y2="1"><stop offset="0" stop-color="#ffffff"/><stop offset="0.5" stop-color="#f6f6f6"/><stop offset="1" stop-color="#dedede"/></linearGradient></defs><rect x="0.5" y="0.5" width="8" height="8" rx="1" fill="url(#pb)" stroke="#9a9a9a"/><path d="M2 4.5H7M4.5 2V7" stroke="#3a5aa8" stroke-width="1"/></svg>
<div class="t" style="left:135px;top:434px;font-size:11px;letter-spacing:-0.25px;color:#000">swtpm</div>
<div class="a" style="left:104px;top:455px;width:10px;height:1px;background:repeating-linear-gradient(90deg,#8c8c8c 0 1px,transparent 1px 2px)"></div>
<svg class="a" style="left:114px;top:448px" width="16" height="13"><defs><linearGradient id="fg" x1="0" y1="0" x2="0" y2="1"><stop offset="0" stop-color="#fff6b8"/><stop offset="1" stop-color="#f8cf4a"/></linearGradient></defs><path d="M0.5 2.5Q0.5 0.5 2.5 0.5H5.5L7 2.5H13.5Q14.5 2.5 14.5 3.5V11.5H0.5Z" fill="#fde68a" stroke="#c8952e"/><path d="M0.5 4.5H14.5V11.5H0.5Z" fill="url(#fg)" stroke="#c8952e"/><path d="M2 5.5V11M13 5.5V11" stroke="#fffbe0" stroke-width="1"/><path d="M1 12.5H15.5V4" stroke="#b07a1e" stroke-opacity="0.55" fill="none"/></svg>
<div class="t" style="left:135px;top:450px;font-size:11px;letter-spacing:-0.25px;color:#000">tuned</div>
<div class="a" style="left:85px;top:471px;width:10px;height:1px;background:repeating-linear-gradient(90deg,#8c8c8c 0 1px,transparent 1px 2px)"></div>
<svg class="a" style="left:95px;top:464px" width="16" height="13"><defs><linearGradient id="fg" x1="0" y1="0" x2="0" y2="1"><stop offset="0" stop-color="#fff6b8"/><stop offset="1" stop-color="#f8cf4a"/></linearGradient></defs><path d="M0.5 2.5Q0.5 0.5 2.5 0.5H5.5L7 2.5H13.5Q14.5 2.5 14.5 3.5V11.5H0.5Z" fill="#fde68a" stroke="#c8952e"/><path d="M0.5 4.5H14.5V11.5H0.5Z" fill="url(#fg)" stroke="#c8952e"/><path d="M2 5.5V11M13 5.5V11" stroke="#fffbe0" stroke-width="1"/><path d="M1 12.5H15.5V4" stroke="#b07a1e" stroke-opacity="0.55" fill="none"/></svg>
<div class="t" style="left:116px;top:466px;font-size:11px;letter-spacing:-0.25px;color:#000">nis</div>
<div class="a" style="left:-2px;top:480px;width:295px;height:24px;border:1px solid #a0a0a0;border-radius:2px;background:#f0f0f0"></div>
<div class="t" style="left:0px;top:486px;font-size:12px;letter-spacing:-0.162px;">Custom Content Sources</div>
<svg class="a" style="left:276px;top:487px" width="10" height="10"><path d="M1 1L9 9M9 1L1 9" stroke="#666" stroke-width="1"/></svg>
<div class="a" style="left:-1px;top:505px;width:292px;height:342px;border:1px solid #828790;background:#fff"></div>
<div class="t" style="left:4px;top:514px;font-size:11px;letter-spacing:-0.184px;">Evidence:File System|Path|File</div>
<div class="a" style="left:223px;top:507px;width:1px;height:21px;background:#e5e5e5;"></div>
<div class="t" style="left:230px;top:514px;font-size:11px;letter-spacing:-0.173px;">Options</div>
<div class="a" style="left:0px;top:829px;width:290px;height:16px;background:#f0f0f0;"></div>
<div class="a" style="left:16px;top:829px;width:165px;height:15px;background:#cdcdcd;"></div>
<svg class="a" style="left:3px;top:832px" width="8" height="10"><path d="M6 1.5L2.5 5L6 8.5" stroke="#606060" stroke-width="2" fill="none"/></svg>
<svg class="a" style="left:277px;top:832px" width="8" height="10"><path d="M2 1.5L5.5 5L2 8.5" stroke="#606060" stroke-width="2" fill="none"/></svg>
<div class="a" style="left:1px;top:851px;width:27px;height:21px;background:#e1e1e1;border:1px solid #adadad"></div>
<div class="t" style="left:3.4px;top:857px;font-size:11px;letter-spacing:-0.335px;color:#000;">New</div>
<div class="a" style="left:33px;top:851px;width:31px;height:21px;background:#cccccc;border:1px solid #bfbfbf"></div>
<div class="t" style="left:38.6px;top:857px;font-size:11px;letter-spacing:-0.189px;color:#838383;">Edit</div>
<div class="a" style="left:69px;top:851px;width:45px;height:21px;background:#cccccc;border:1px solid #bfbfbf"></div>
<div class="t" style="left:71.4px;top:857px;font-size:11px;letter-spacing:-0.360px;color:#838383;">Remove</div>
<div class="a" style="left:120px;top:851px;width:58px;height:21px;background:#cccccc;border:1px solid #bfbfbf"></div>
<div class="t" style="left:121.7px;top:857px;font-size:11px;letter-spacing:-0.313px;color:#838383;">Remove All</div>
<div class="a" style="left:183px;top:851px;width:72px;height:21px;background:#cccccc;border:1px solid #bfbfbf"></div>
<div class="t" style="left:185.4px;top:857px;font-size:11px;letter-spacing:-0.070px;color:#838383;">Create Image</div>
<div class="a" style="left:0px;top:880px;width:192px;height:1px;background:#a0a0a0;"></div>
<div class="a" style="left:0px;top:881px;width:192px;height:24px;background:#fcfcfc;"></div>
<div class="t" style="left:22.7px;top:885px;font-size:12px;letter-spacing:-0.239px;color:#a0a0a0;">Properties</div>
<div class="a" style="left:96px;top:883px;width:1px;height:16px;background:#808080;"></div>
<div class="t" style="left:100.5px;top:885px;font-size:12px;letter-spacing:-0.187px;color:#a0a0a0;">Hex Value Inter...</div>
<div class="a" style="left:192px;top:880px;width:97px;height:21px;background:#fcfcfc;border-right:1px solid #808080;border-bottom:1px solid #808080"></div>
<div class="t" style="left:198.5px;top:885px;font-size:12px;letter-spacing:-0.093px;">Custom Conte...</div>
<div class="t" style="left:0px;top:910px;font-size:12px;letter-spacing:-0.434px;">Listed: 43</div>
<div class="t" style="left:55.9px;top:910px;font-size:12px;letter-spacing:-0.467px;">Selected: 1</div>
<div class="t" style="left:120.2px;top:910px;font-size:12px;">02.E01/NONAME [ext4]/[root]/va</div>
<div class="a" style="left:298px;top:54px;width:920px;height:24px;border:1px solid #a0a0a0;border-radius:2px;background:#f0f0f0"></div>
<div class="t" style="left:299.3px;top:60px;font-size:12px;letter-spacing:-0.294px;">File List</div>
<div class="a" style="left:297px;top:78px;width:917px;height:272px;background:#fff;"></div>
<div class="t" style="left:303.4px;top:85px;font-size:12px;letter-spacing:-0.077px;">Name</div>
<div class="a" style="left:546px;top:78px;width:1px;height:25px;background:#e5e5e5;"></div>
<div class="t" style="left:546.5px;top:85px;font-size:12px;width:95px;text-align:right;letter-spacing:-0.45px">Size</div>
<div class="a" style="left:646px;top:78px;width:1px;height:25px;background:#e5e5e5;"></div>
<div class="t" style="left:653px;top:85px;font-size:12px;letter-spacing:-0.2px">Type</div>
<div class="a" style="left:746px;top:78px;width:1px;height:25px;background:#e5e5e5;"></div>
<div class="t" style="left:753.5px;top:85px;font-size:12px;letter-spacing:0.020px;">Date Modified</div>
<div class="a" style="left:896px;top:78px;width:1px;height:25px;background:#e5e5e5;"></div>
<svg class="a" style="left:303px;top:104px" width="13" height="16"><path d="M0.5 0.5H8.5L11.5 3.5V15.5H0.5Z" fill="#fbfbfb" stroke="#8a8a8a"/><path d="M8.5 0.5V3.5H11.5" fill="none" stroke="#8a8a8a"/><path d="M2.5 5.5H9.5" stroke="#a0a0a0"/><path d="M2.5 7.5H9.5" stroke="#a0a0a0"/><path d="M2.5 9.5H9.5" stroke="#a0a0a0"/><path d="M2.5 11.5H9.5" stroke="#a0a0a0"/><path d="M2.5 13.5H9.5" stroke="#a0a0a0"/></svg>
<div class="t" style="left:320px;top:107px;font-size:12px;letter-spacing:0.1px">dnf.librepo.log</div>
<div class="t" style="left:546.5px;top:107px;font-size:12px;width:95px;text-align:right;letter-spacing:-0.4px">7</div>
<div class="t" style="left:653.2px;top:107px;font-size:12px;letter-spacing:-0.291px;">Regular File</div>
<div class="t" style="left:753.5px;top:107px;font-size:12px;letter-spacing:-0.416px;">24/08/2021 12:52:20</div>
<svg class="a" style="left:303px;top:123px" width="13" height="16"><path d="M0.5 0.5H8.5L11.5 3.5V15.5H0.5Z" fill="#fbfbfb" stroke="#8a8a8a"/><path d="M8.5 0.5V3.5H11.5" fill="none" stroke="#8a8a8a"/><path d="M2.5 5.5H9.5" stroke="#a0a0a0"/><path d="M2.5 7.5H9.5" stroke="#a0a0a0"/><path d="M2.5 9.5H9.5" stroke="#a0a0a0"/><path d="M2.5 11.5H9.5" stroke="#a0a0a0"/><path d="M2.5 13.5H9.5" stroke="#a0a0a0"/></svg>
<div class="t" style="left:320px;top:126px;font-size:12px;letter-spacing:0.1px">dnf.log</div>
<div class="t" style="left:546.5px;top:126px;font-size:12px;width:95px;text-align:right;letter-spacing:-0.4px">19</div>
<div class="t" style="left:653.2px;top:126px;font-size:12px;letter-spacing:-0.291px;">Regular File</div>
<div class="t" style="left:753.5px;top:126px;font-size:12px;letter-spacing:-0.416px;">24/08/2021 12:52:32</div>
<svg class="a" style="left:303px;top:142px" width="13" height="16"><path d="M0.5 0.5H8.5L11.5 3.5V15.5H0.5Z" fill="#fbfbfb" stroke="#8a8a8a"/><path d="M8.5 0.5V3.5H11.5" fill="none" stroke="#8a8a8a"/><path d="M2.5 5.5H9.5" stroke="#a0a0a0"/><path d="M2.5 7.5H9.5" stroke="#a0a0a0"/><path d="M2.5 9.5H9.5" stroke="#a0a0a0"/><path d="M2.5 11.5H9.5" stroke="#a0a0a0"/><path d="M2.5 13.5H9.5" stroke="#a0a0a0"/></svg>
<div class="t" style="left:320px;top:145px;font-size:12px;letter-spacing:0.1px">dnf.rpm.log</div>
<div class="t" style="left:546.5px;top:145px;font-size:12px;width:95px;text-align:right;letter-spacing:-0.4px">2</div>
<div class="t" style="left:653.2px;top:145px;font-size:12px;letter-spacing:-0.291px;">Regular File</div>
<div class="t" style="left:753.5px;top:145px;font-size:12px;letter-spacing:-0.416px;">24/08/2021 12:52:29</div>
<svg class="a" style="left:303px;top:161px" width="13" height="16"><path d="M0.5 0.5H8.5L11.5 3.5V15.5H0.5Z" fill="#fbfbfb" stroke="#8a8a8a"/><path d="M8.5 0.5V3.5H11.5" fill="none" stroke="#8a8a8a"/></svg>
<div class="t" style="left:320px;top:164px;font-size:12px;letter-spacing:0.1px">firewalld</div>
<div class="t" style="left:546.5px;top:164px;font-size:12px;width:95px;text-align:right;letter-spacing:-0.4px">2</div>
<div class="t" style="left:653.2px;top:164px;font-size:12px;letter-spacing:-0.291px;">Regular File</div>
<div class="t" style="left:753.5px;top:164px;font-size:12px;letter-spacing:-0.416px;">24/08/2021 14:05:38</div>
<svg class="a" style="left:303px;top:180px" width="13" height="16"><path d="M0.5 0.5H8.5L11.5 3.5V15.5H0.5Z" fill="#fbfbfb" stroke="#8a8a8a"/><path d="M8.5 0.5V3.5H11.5" fill="none" stroke="#8a8a8a"/><path d="M2.5 5.5H9.5" stroke="#a0a0a0"/><path d="M2.5 7.5H9.5" stroke="#a0a0a0"/><path d="M2.5 9.5H9.5" stroke="#a0a0a0"/><path d="M2.5 11.5H9.5" stroke="#a0a0a0"/><path d="M2.5 13.5H9.5" stroke="#a0a0a0"/></svg>
<div class="t" style="left:320px;top:183px;font-size:12px;letter-spacing:0.1px">hawkey.log</div>
<div class="t" style="left:546.5px;top:183px;font-size:12px;width:95px;text-align:right;letter-spacing:-0.4px">1</div>
<div class="t" style="left:653.2px;top:183px;font-size:12px;letter-spacing:-0.291px;">Regular File</div>
<div class="t" style="left:753.5px;top:183px;font-size:12px;letter-spacing:-0.416px;">24/08/2021 12:52:31</div>
<svg class="a" style="left:303px;top:199px" width="13" height="16"><path d="M0.5 0.5H8.5L11.5 3.5V15.5H0.5Z" fill="#fbfbfb" stroke="#8a8a8a"/><path d="M8.5 0.5V3.5H11.5" fill="none" stroke="#8a8a8a"/><path d="M2.5 5.5H9.5" stroke="#a0a0a0"/><path d="M2.5 7.5H9.5" stroke="#a0a0a0"/><path d="M2.5 9.5H9.5" stroke="#a0a0a0"/><path d="M2.5 11.5H9.5" stroke="#a0a0a0"/><path d="M2.5 13.5H9.5" stroke="#a0a0a0"/></svg>
<div class="t" style="left:320px;top:202px;font-size:12px;letter-spacing:0.1px">kdump.log</div>
<div class="t" style="left:546.5px;top:202px;font-size:12px;width:95px;text-align:right;letter-spacing:-0.4px">6</div>
<div class="t" style="left:653.2px;top:202px;font-size:12px;letter-spacing:-0.291px;">Regular File</div>
<div class="t" style="left:753.5px;top:202px;font-size:12px;letter-spacing:-0.416px;">24/08/2021 14:05:42</div>
<svg class="a" style="left:303px;top:218px" width="13" height="16"><path d="M0.5 0.5H8.5L11.5 3.5V15.5H0.5Z" fill="#fbfbfb" stroke="#8a8a8a"/><path d="M8.5 0.5V3.5H11.5" fill="none" stroke="#8a8a8a"/></svg>
<div class="t" style="left:320px;top:221px;font-size:12px;letter-spacing:0.1px">lastlog</div>
<div class="t" style="left:546.5px;top:221px;font-size:12px;width:95px;text-align:right;letter-spacing:-0.4px">287</div>
<div class="t" style="left:653.2px;top:221px;font-size:12px;letter-spacing:-0.291px;">Regular File</div>
<div class="t" style="left:753.5px;top:221px;font-size:12px;letter-spacing:-0.416px;">24/08/2021 14:06:41</div>
<svg class="a" style="left:303px;top:237px" width="13" height="16"><path d="M0.5 0.5H8.5L11.5 3.5V15.5H0.5Z" fill="#fbfbfb" stroke="#8a8a8a"/><path d="M8.5 0.5V3.5H11.5" fill="none" stroke="#8a8a8a"/></svg>
<div class="t" style="left:320px;top:240px;font-size:12px;letter-spacing:0.1px">maillog</div>
<div class="t" style="left:546.5px;top:240px;font-size:12px;width:95px;text-align:right;letter-spacing:-0.4px">0</div>
<div class="t" style="left:653.2px;top:240px;font-size:12px;letter-spacing:-0.291px;">Regular File</div>
<div class="t" style="left:753.5px;top:240px;font-size:12px;letter-spacing:-0.416px;">23/08/2021 13:06:24</div>
<svg class="a" style="left:303px;top:256px" width="13" height="16"><path d="M0.5 0.5H8.5L11.5 3.5V15.5H0.5Z" fill="#fbfbfb" stroke="#8a8a8a"/><path d="M8.5 0.5V3.5H11.5" fill="none" stroke="#8a8a8a"/></svg>
<div class="t" style="left:320px;top:259px;font-size:12px;letter-spacing:0.1px">messages</div>
<div class="t" style="left:546.5px;top:259px;font-size:12px;width:95px;text-align:right;letter-spacing:-0.4px">2.241</div>
<div class="t" style="left:653.2px;top:259px;font-size:12px;letter-spacing:-0.291px;">Regular File</div>
<div class="t" style="left:753.5px;top:259px;font-size:12px;letter-spacing:-0.416px;">24/08/2021 14:12:19</div>
<div class="a" style="left:317px;top:274px;width:580px;height:19px;background:#f0f0f0;"></div>
<svg class="a" style="left:303px;top:275px" width="13" height="16"><path d="M0.5 0.5H8.5L11.5 3.5V15.5H0.5Z" fill="#fbfbfb" stroke="#8a8a8a"/><path d="M8.5 0.5V3.5H11.5" fill="none" stroke="#8a8a8a"/></svg>
<svg class="a" style="left:301px;top:275px" width="16" height="16" shape-rendering="crispEdges"><rect x="0" y="0" width="1" height="1" fill="#0a6fd0"/><rect x="0" y="2" width="1" height="1" fill="#0a6fd0"/><rect x="0" y="4" width="1" height="1" fill="#0a6fd0"/><rect x="0" y="6" width="1" height="1" fill="#0a6fd0"/><rect x="0" y="8" width="1" height="1" fill="#0a6fd0"/><rect x="0" y="10" width="1" height="1" fill="#0a6fd0"/><rect x="0" y="12" width="1" height="1" fill="#0a6fd0"/><rect x="0" y="14" width="1" height="1" fill="#0a6fd0"/><rect x="2" y="0" width="1" height="1" fill="#0a6fd0"/><rect x="2" y="2" width="1" height="1" fill="#0a6fd0"/><rect x="2" y="4" width="1" height="1" fill="#0a6fd0"/><rect x="2" y="6" width="1" height="1" fill="#0a6fd0"/><rect x="2" y="8" width="1" height="1" fill="#0a6fd0"/><rect x="2" y="10" width="1" height="1" fill="#0a6fd0"/><rect x="2" y="12" width="1" height="1" fill="#0a6fd0"/><rect x="2" y="14" width="1" height="1" fill="#0a6fd0"/><rect x="4" y="0" width="1" height="1" fill="#0a6fd0"/><rect x="4" y="2" width="1" height="1" fill="#0a6fd0"/><rect x="4" y="4" width="1" height="1" fill="#0a6fd0"/><rect x="4" y="6" width="1" height="1" fill="#0a6fd0"/><rect x="4" y="8" width="1" height="1" fill="#0a6fd0"/><rect x="4" y="10" width="1" height="1" fill="#0a6fd0"/><rect x="4" y="12" width="1" height="1" fill="#0a6fd0"/><rect x="4" y="14" width="1" height="1" fill="#0a6fd0"/><rect x="6" y="0" width="1" height="1" fill="#0a6fd0"/><rect x="6" y="2" width="1" height="1" fill="#0a6fd0"/><rect x="6" y="4" width="1" height="1" fill="#0a6fd0"/><rect x="6" y="6" width="1" height="1" fill="#0a6fd0"/><rect x="6" y="8" width="1" height="1" fill="#0a6fd0"/><rect x="6" y="10" width="1" height="1" fill="#0a6fd0"/><rect x="6" y="12" width="1" height="1" fill="#0a6fd0"/><rect x="6" y="14" width="1" height="1" fill="#0a6fd0"/><rect x="8" y="0" width="1" height="1" fill="#0a6fd0"/><rect x="8" y="2" width="1" height="1" fill="#0a6fd0"/><rect x="8" y="4" width="1" height="1" fill="#0a6fd0"/><rect x="8" y="6" width="1" height="1" fill="#0a6fd0"/><rect x="8" y="8" width="1" height="1" fill="#0a6fd0"/><rect x="8" y="10" width="1" height="1" fill="#0a6fd0"/><rect x="8" y="12" width="1" height="1" fill="#0a6fd0"/><rect x="8" y="14" width="1" height="1" fill="#0a6fd0"/><rect x="10" y="0" width="1" height="1" fill="#0a6fd0"/><rect x="10" y="2" width="1" height="1" fill="#0a6fd0"/><rect x="10" y="4" width="1" height="1" fill="#0a6fd0"/><rect x="10" y="6" width="1" height="1" fill="#0a6fd0"/><rect x="10" y="8" width="1" height="1" fill="#0a6fd0"/><rect x="10" y="10" width="1" height="1" fill="#0a6fd0"/><rect x="10" y="12" width="1" height="1" fill="#0a6fd0"/><rect x="10" y="14" width="1" height="1" fill="#0a6fd0"/><rect x="12" y="0" width="1" height="1" fill="#0a6fd0"/><rect x="12" y="2" width="1" height="1" fill="#0a6fd0"/><rect x="12" y="4" width="1" height="1" fill="#0a6fd0"/><rect x="12" y="6" width="1" height="1" fill="#0a6fd0"/><rect x="12" y="8" width="1" height="1" fill="#0a6fd0"/><rect x="12" y="10" width="1" height="1" fill="#0a6fd0"/><rect x="12" y="12" width="1" height="1" fill="#0a6fd0"/><rect x="12" y="14" width="1" height="1" fill="#0a6fd0"/><rect x="14" y="0" width="1" height="1" fill="#0a6fd0"/><rect x="14" y="2" width="1" height="1" fill="#0a6fd0"/><rect x="14" y="4" width="1" height="1" fill="#0a6fd0"/><rect x="14" y="6" width="1" height="1" fill="#0a6fd0"/><rect x="14" y="8" width="1" height="1" fill="#0a6fd0"/><rect x="14" y="10" width="1" height="1" fill="#0a6fd0"/><rect x="14" y="12" width="1" height="1" fill="#0a6fd0"/><rect x="14" y="14" width="1" height="1" fill="#0a6fd0"/></svg>
<div class="t" style="left:320px;top:278px;font-size:12px;letter-spacing:0.1px">secure</div>
<div class="t" style="left:546.5px;top:278px;font-size:12px;width:95px;text-align:right;letter-spacing:-0.4px">104</div>
<div class="t" style="left:653.2px;top:278px;font-size:12px;letter-spacing:-0.291px;">Regular File</div>
<div class="a" style="left:784px;top:275px;width:29px;height:17px;background:#f5f50a;"></div>
<div class="t" style="left:753.5px;top:278px;font-size:12px;letter-spacing:-0.416px;">24/08/2021 14:06:52</div>
<svg class="a" style="left:303px;top:294px" width="13" height="16"><path d="M0.5 0.5H8.5L11.5 3.5V15.5H0.5Z" fill="#fbfbfb" stroke="#8a8a8a"/><path d="M8.5 0.5V3.5H11.5" fill="none" stroke="#8a8a8a"/></svg>
<div class="t" style="left:320px;top:297px;font-size:12px;letter-spacing:0.1px">spooler</div>
<div class="t" style="left:546.5px;top:297px;font-size:12px;width:95px;text-align:right;letter-spacing:-0.4px">0</div>
<div class="t" style="left:653.2px;top:297px;font-size:12px;letter-spacing:-0.291px;">Regular File</div>
<div class="t" style="left:753.5px;top:297px;font-size:12px;letter-spacing:-0.416px;">23/08/2021 13:06:24</div>
<svg class="a" style="left:303px;top:313px" width="13" height="16"><path d="M0.5 0.5H8.5L11.5 3.5V15.5H0.5Z" fill="#fbfbfb" stroke="#8a8a8a"/><path d="M8.5 0.5V3.5H11.5" fill="none" stroke="#8a8a8a"/><path d="M2.5 5.5H9.5" stroke="#a0a0a0"/><path d="M2.5 7.5H9.5" stroke="#a0a0a0"/><path d="M2.5 9.5H9.5" stroke="#a0a0a0"/><path d="M2.5 11.5H9.5" stroke="#a0a0a0"/><path d="M2.5 13.5H9.5" stroke="#a0a0a0"/></svg>
<div class="t" style="left:320px;top:316px;font-size:12px;letter-spacing:0.1px"></div>
<div class="t" style="left:546.5px;top:316px;font-size:12px;width:95px;text-align:right;letter-spacing:-0.4px">1</div>
<div class="t" style="left:653.2px;top:316px;font-size:12px;letter-spacing:-0.291px;">Regular File</div>
<div class="t" style="left:753.5px;top:316px;font-size:12px;letter-spacing:-0.416px;">24/08/2021 14:05:37</div>
<div class="a" style="left:380.5px;top:318px;width:1.2px;height:1px;background:#333;"></div>
<div class="a" style="left:404px;top:317px;width:1.2px;height:2px;background:#333;"></div>
<div class="a" style="left:414.5px;top:317px;width:1.2px;height:2px;background:#333;"></div>
<div class="a" style="left:422.5px;top:317px;width:1.2px;height:2px;background:#333;"></div>
<div class="a" style="left:1136px;top:350px;width:78px;height:5px;background:#f0f0f0;"></div>
<div class="a" style="left:1136px;top:355px;width:78px;height:1px;background:#6a6a6a;"></div>
<div class="a" style="left:1136px;top:356px;width:78px;height:1px;background:#a0a0a0;"></div>
<div class="a" style="left:1136px;top:357px;width:78px;height:1px;background:#6a6a6a;"></div>
<div class="a" style="left:1136px;top:358px;width:78px;height:527px;background:#fff;"></div>
<div class="a" style="left:1136px;top:885px;width:78px;height:15px;background:#c8c8c8;"></div>
<div class="a" style="left:1136px;top:900px;width:78px;height:5px;background:#fff;"></div>
<div class="t mono" style="left:1137.5px;top:471.5px;font-size:13px">initial-se</div>
<div class="t mono" style="left:1137.5px;top:487.5px;font-size:13px">ion opened</div>
<div class="t mono" style="left:1137.5px;top:503.5px;font-size:13px">initial-se</div>
<div class="t mono" style="left:1137.5px;top:535.5px;font-size:13px">cyberdefen</div>
<div class="t mono" style="left:1137.5px;top:583.5px;font-size:13px">initial-se</div>
<div class="t mono" style="left:1137.5px;top:615.5px;font-size:13px">efenders b</div>
<div class="t mono" style="left:1137.5px;top:631.5px;font-size:13px">cyberdefen</div>
<div class="t mono" style="left:1137.5px;top:647.5px;font-size:13px"> name :1.3</div>
<div class="t mono" style="left:1137.5px;top:663.5px;font-size:13px">ion closed</div>
<div class="t mono" style="left:1130px;top:775.5px;font-size:13px">r (uid=0)</div>
<div class="t mono" style="left:1137.5px;top:791.5px;font-size:13px">ion opened</div>
<div class="t mono" style="left:1137.5px;top:807.5px;font-size:13px">s name :1.3</div>
<div class="t mono" style="left:1137.5px;top:823.5px;font-size:13px">efenders b</div>
<div class="t mono" style="left:1137.5px;top:839.5px;font-size:13px">cyberdefen</div>
<div class="t mono" style="left:1137.5px;top:855.5px;font-size:13px"> name :1.3</div>
<div class="t mono" style="left:1137.5px;top:871.5px;font-size:13px">ion closed</div>
<div class="a" style="left:295px;top:319px;width:841px;height:620px;background:#fff;border:1px solid #5a5a5a;box-shadow:0 0 14px rgba(0,0,0,0.35)"></div>
<svg class="a" style="left:304px;top:325px" width="17" height="18"><defs><linearGradient id="npg" x1="0" y1="0" x2="1" y2="1"><stop offset="0" stop-color="#e6f4fb"/><stop offset="1" stop-color="#7fc0dc"/></linearGradient></defs><path d="M4.5 4.5H15.5V16.5H4.5Z" fill="#fff" stroke="#a08a60"/><path d="M3.5 2.5H14.5V14.5H0.5Z" fill="url(#npg)" stroke="#6aaed0" stroke-width="0.8"/><path d="M3 6H14M2.5 8.5H14M2 11H14" stroke="#ffffff" stroke-opacity="0.6" stroke-width="0.8"/><path d="M3.5 2.5L4.5 1.2L5.5 2.5L6.5 1.2L7.5 2.5L8.5 1.2L9.5 2.5L10.5 1.2L11.5 2.5L12.5 1.2L13.5 2.5L14.5 1.2" stroke="#555" stroke-width="0.8" fill="none"/></svg>
<div class="t" style="left:325px;top:329px;font-size:12px;letter-spacing:-0.242px;">ftk_287180d5-6600-480a-93a9-f82c63fa1a07.tmp: Bloc de notas</div>
<div class="a" style="left:1016px;top:334px;width:10px;height:1px;background:#000;"></div>
<div class="a" style="left:1061px;top:329px;width:10px;height:10px;border:1px solid #000"></div>
<svg class="a" style="left:1107px;top:329px" width="11" height="11"><path d="M0.3 0.3L10 10M10 0.3L0.3 10" stroke="#000" stroke-width="1.15"/></svg>
<div class="t" style="left:303px;top:354px;font-size:12px;">Archivo</div>
<div class="t" style="left:358px;top:354px;font-size:12px;">Edición</div>
<div class="t" style="left:411px;top:354px;font-size:12px;">Formato</div>
<div class="t" style="left:470px;top:354px;font-size:12px;">Ver</div>
<div class="t" style="left:500px;top:354px;font-size:12px;">Ayuda</div>
<div class="a" style="left:296px;top:369px;width:839px;height:1px;background:#f0f0f0;"></div>
<div class="a" style="left:296px;top:370px;width:823px;height:536px;overflow:hidden">
<div class="a" style="left:500px;top:361px;width:121px;height:16px;background:#0078d7;"></div>
<div class="t mono" style="left:4px;top:1px;font-size:14px;letter-spacing:-0.4px;line-height:18px">Aug 23 13:54:08 localhost polkitd[3478]: Unregistered Authentication Agent for unix-session:c4 (system</div>
<div class="t mono" style="left:4px;top:19px;font-size:14px;letter-spacing:-0.4px;line-height:18px">Aug 23 13:54:13 localhost gdm-launch-environment][36773]: pam_unix(gdm-launch-environment:session): se</div>
<div class="t mono" style="left:4px;top:37px;font-size:14px;letter-spacing:-0.4px;line-height:18px">Aug 23 13:54:14 localhost polkitd[3478]: Registered Authentication Agent for unix-session:11 (system b</div>
<div class="t mono" style="left:4px;top:55px;font-size:14px;letter-spacing:-0.4px;line-height:18px">Aug 23 13:54:21 localhost polkitd[3478]: Operator of unix-session:11 FAILED to authenticate to gain au</div>
<div class="t mono" style="left:4px;top:73px;font-size:14px;letter-spacing:-0.4px;line-height:18px">Aug 23 13:56:06 localhost systemd[38534]: pam_unix(systemd-user:session): session opened for user gdm</div>
<div class="t mono" style="left:4px;top:91px;font-size:14px;letter-spacing:-0.4px;line-height:18px">Aug 23 13:56:06 localhost gdm-launch-environment][38528]: pam_unix(gdm-launch-environment:session): se</div>
<div class="t mono" style="left:4px;top:109px;font-size:14px;letter-spacing:-0.4px;line-height:18px">Aug 23 13:56:08 localhost polkitd[3478]: Registered Authentication Agent for unix-session:c5 (system b</div>
<div class="t mono" style="left:4px;top:127px;font-size:14px;letter-spacing:-0.4px;line-height:18px">Aug 23 13:56:17 localhost gdm-password][38974]: gkr-pam: unlocked login keyring</div>
<div class="t mono" style="left:4px;top:145px;font-size:14px;letter-spacing:-0.4px;line-height:18px">Aug 23 13:56:36 localhost polkitd[3478]: Registered Authentication Agent for unix-process:39224:175270</div>
<div class="t mono" style="left:4px;top:163px;font-size:14px;letter-spacing:-0.4px;line-height:18px">Aug 23 13:56:42 localhost polkitd[3478]: Operator of unix-session:2 successfully authenticated as unix</div>
<div class="t mono" style="left:4px;top:181px;font-size:14px;letter-spacing:-0.4px;line-height:18px">Aug 23 13:56:43 localhost polkitd[3478]: Unregistered Authentication Agent for unix-process:39224:1752</div>
<div class="t mono" style="left:4px;top:199px;font-size:14px;letter-spacing:-0.4px;line-height:18px">Aug 23 13:57:27 localhost sshd[39495]: Accepted password for rossatron from 192.168.196.1 port 1074 ss</div>
<div class="t mono" style="left:4px;top:217px;font-size:14px;letter-spacing:-0.4px;line-height:18px">Aug 23 13:57:28 localhost sshd[39495]: pam_unix(sshd:session): session opened for user rossatron by (u</div>
<div class="t mono" style="left:4px;top:235px;font-size:14px;letter-spacing:-0.4px;line-height:18px">Aug 23 13:58:28 localhost sshd[39495]: pam_unix(sshd:session): session closed for user rossatron</div>
<div class="t mono" style="left:4px;top:253px;font-size:14px;letter-spacing:-0.4px;line-height:18px">Aug 23 14:00:02 localhost sshd[39731]: Accepted password for chandler from 192.168.196.125 port 1152 s</div>
<div class="t mono" style="left:4px;top:271px;font-size:14px;letter-spacing:-0.4px;line-height:18px">Aug 23 14:00:02 localhost sshd[39731]: pam_unix(sshd:session): session opened for user chandler by (ui</div>
<div class="t mono" style="left:4px;top:289px;font-size:14px;letter-spacing:-0.4px;line-height:18px">Aug 23 14:00:10 localhost sshd[39731]: pam_unix(sshd:session): session closed for user chandler</div>
<div class="t mono" style="left:4px;top:307px;font-size:14px;letter-spacing:-0.4px;line-height:18px">Aug 23 14:00:43 localhost sshd[39913]: Accepted password for tribbiani.j from 192.168.196.176 port 120</div>
<div class="t mono" style="left:4px;top:325px;font-size:14px;letter-spacing:-0.4px;line-height:18px">Aug 23 14:00:43 localhost sshd[39913]: pam_unix(sshd:session): session opened for user tribbiani.j by</div>
<div class="t mono" style="left:4px;top:343px;font-size:14px;letter-spacing:-0.4px;line-height:18px">Aug 23 14:01:01 localhost sshd[39913]: pam_unix(sshd:session): session closed for user tribbiani.j</div>
<div class="t mono" style="left:4px;top:361px;font-size:14px;letter-spacing:-0.4px;line-height:18px">Aug 23 14:02:01 localhost sshd[40131]: Invalid user ross from <span style="color:#fff">192.168.196.128</span> port 37020</div>
<div class="t mono" style="left:4px;top:379px;font-size:14px;letter-spacing:-0.4px;line-height:18px">Aug 23 14:02:01 localhost sshd[40131]: Received disconnect from 192.168.196.128 port 37020:11: Bye Bye</div>
<div class="t mono" style="left:4px;top:397px;font-size:14px;letter-spacing:-0.4px;line-height:18px">Aug 23 14:02:01 localhost sshd[40131]: Disconnected from invalid user ross 192.168.196.128 port 37020</div>
<div class="t mono" style="left:4px;top:415px;font-size:14px;letter-spacing:-0.4px;line-height:18px">Aug 23 14:02:02 localhost sshd[40134]: Invalid user ross from 192.168.196.128 port 37028</div>
<div class="t mono" style="left:4px;top:433px;font-size:14px;letter-spacing:-0.4px;line-height:18px">Aug 23 14:02:02 localhost sshd[40135]: Invalid user ross from 192.168.196.128 port 37024</div>
<div class="t mono" style="left:4px;top:451px;font-size:14px;letter-spacing:-0.4px;line-height:18px">Aug 23 14:02:02 localhost sshd[40136]: Invalid user ross from 192.168.196.128 port 37026</div>
<div class="t mono" style="left:4px;top:469px;font-size:14px;letter-spacing:-0.4px;line-height:18px">Aug 23 14:02:02 localhost sshd[40133]: Invalid user ross from 192.168.196.128 port 37022</div>
<div class="t mono" style="left:4px;top:487px;font-size:14px;letter-spacing:-0.4px;line-height:18px">Aug 23 14:02:02 localhost sshd[40135]: pam_unix(sshd:auth): check pass; user unknown</div>
<div class="t mono" style="left:4px;top:505px;font-size:14px;letter-spacing:-0.4px;line-height:18px">Aug 23 14:02:02 localhost sshd[40134]: pam_unix(sshd:auth): check pass; user unknown</div>
<div class="t mono" style="left:4px;top:523px;font-size:14px;letter-spacing:-0.4px;line-height:18px">Aug 23 14:02:02 localhost sshd[40135]: pam_unix(sshd:auth): authentication failure; logname= uid=0 eui</div>
</div>
<div class="a" style="left:1119px;top:370px;width:16px;height:555px;background:#f0f0f0;"></div>
<div class="a" style="left:1120px;top:451px;width:14px;height:18px;background:#cdcdcd;"></div>
<svg class="a" style="left:1122px;top:374px" width="10" height="8"><path d="M1.5 6L5 2.5L8.5 6" stroke="#606060" stroke-width="2" fill="none"/></svg>
<svg class="a" style="left:1122px;top:893px" width="10" height="8"><path d="M1.5 2L5 5.5L8.5 2" stroke="#606060" stroke-width="2" fill="none"/></svg>
<div class="a" style="left:296px;top:906px;width:823px;height:19px;background:#f0f0f0;"></div>
<div class="a" style="left:313px;top:906px;width:265px;height:15px;background:#cdcdcd;"></div>
<svg class="a" style="left:301px;top:909px" width="8" height="10"><path d="M6 1.5L2.5 5L6 8.5" stroke="#606060" stroke-width="2" fill="none"/></svg>
<svg class="a" style="left:1106px;top:909px" width="8" height="10"><path d="M2 1.5L5.5 5L2 8.5" stroke="#606060" stroke-width="2" fill="none"/></svg>
<div class="a" style="left:296px;top:725px;width:756px;height:29px;border:5px solid #e81e25"></div>
<div class="a" style="left:0px;top:924px;width:45px;height:1px;background:#d6e8f4;"></div>
<div class="a" style="left:45px;top:924px;width:1169px;height:1px;background:#e4e7ea;"></div>
</body></html>
